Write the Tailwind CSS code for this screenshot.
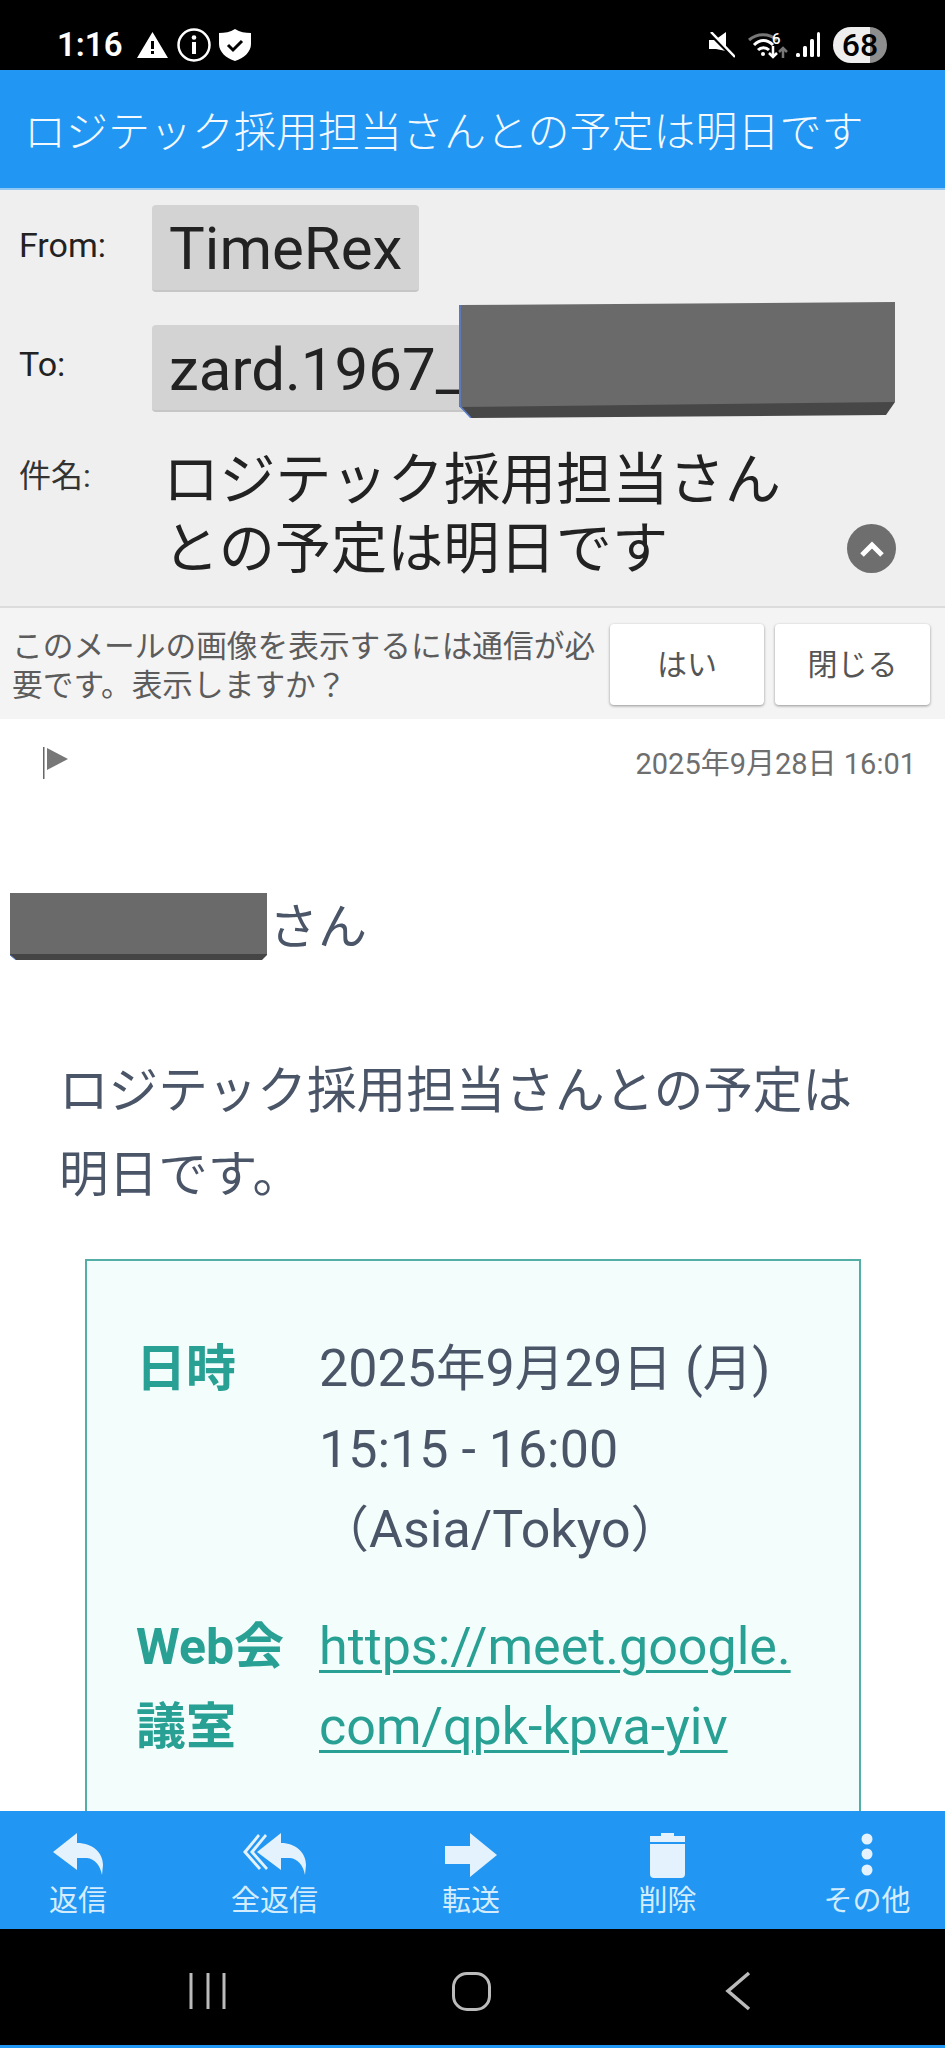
<!DOCTYPE html>
<html lang="ja">
<head>
    <meta charset="UTF-8">
    <meta name="viewport" content="width=device-width, initial-scale=1.0">
    <title>Mail</title>
    <script src="https://cdn.jsdelivr.net/npm/@tailwindcss/browser@4"></script>
</head>
<body class="bg-black">
    <div class="h-[2048px] w-[945px] flex flex-col overflow-hidden font-['Roboto','Noto_Sans_CJK_JP',sans-serif]">
        <!-- status bar -->
        <div class="h-[70px] shrink-0 bg-black flex items-center justify-between pt-[19px] pl-[57px] pr-[58px] text-white">
            <div class="flex items-center">
                <span class="text-[33px] leading-none font-semibold w-[80px]">1:16</span>
                <svg class="w-[31px] h-[26px]" viewBox="0 0 31 26"><path fill="#fff" fill-rule="evenodd" d="M15.5 0L31 26H0ZM14 9v8h3V9ZM14 19v3h3v-3Z"/></svg>
                <svg class="w-[34px] h-[34px] ml-[9px]" viewBox="0 0 34 34"><circle cx="17" cy="17" r="15.5" fill="none" stroke="#fff" stroke-width="2.5"/><rect x="15" y="14" width="4" height="12" fill="#fff"/><circle cx="17" cy="9.5" r="2.3" fill="#fff"/></svg>
                <svg class="w-[32px] h-[32px] ml-[8px]" viewBox="0 0 32 32"><path fill="#fff" d="M16 0C21 3 26 4 32 4V15C32 23 25 29 16 32C7 29 0 23 0 15V4C6 4 11 3 16 0Z"/><path fill="none" stroke="#000" stroke-width="3" d="M9 16l5 5 9-9"/></svg>
            </div>
            <div class="flex items-center">
                <svg class="w-[26px] h-[26px]" viewBox="0 0 26 26"><path fill="#fff" d="M0 8H6L17 0V19L7 17H0Z"/><path stroke="#000" stroke-width="3" d="M0 1L25 26"/><path stroke="#fff" stroke-width="2.5" d="M2 0L26 25"/></svg>
                <svg class="w-[48px] h-[28px] ml-[13px] overflow-visible" viewBox="0 0 48 28"><path fill="none" stroke="#777" stroke-width="3" d="M1 9C9 2 21 2 29 9"/><path fill="none" stroke="#fff" stroke-width="3" d="M6 14C12 8 19 8 25 14M10 19C13 16 18 16 21 19"/><circle cx="15" cy="23" r="2" fill="#fff"/><text x="24" y="13" font-size="15" font-weight="500" fill="#fff">6</text><path fill="none" stroke="#fff" stroke-width="2.5" d="M25 15V26M21 22l4 4 4-4"/><path fill="none" stroke="#777" stroke-width="2.5" d="M35 27V17M31 21l4-4 4 4"/></svg>
                <svg class="w-[24px] h-[26px] ml-[0px]" viewBox="0 0 24 26"><rect x="0" y="21" width="4" height="4" rx="1.5" fill="#fff"/><rect x="7" y="14" width="4" height="11" rx="1.5" fill="#fff"/><rect x="14" y="7" width="4" height="18" rx="1.5" fill="#fff"/><rect x="21" y="0" width="3" height="25" rx="1.5" fill="#fff"/></svg>
                <div class="w-[54px] h-[36px] ml-[13px] rounded-full overflow-hidden flex items-center justify-center text-black text-[32px] font-medium leading-none bg-[linear-gradient(90deg,#eeeeee_68%,#8e8e8e_68%)]">68</div>
            </div>
        </div>

        <!-- title -->
        <div class="h-[120px] shrink-0 bg-[#2196f3] border-b-2 border-[#90c8f3] flex items-center pl-[24px] pt-[7px]">
            <h1 class="text-[42px] leading-none text-[#f2f9ff] font-light whitespace-nowrap">ロジテック採用担当さんとの予定は明日です</h1>
        </div>

        <!-- mail header -->
        <div class="relative h-[418px] shrink-0 bg-[#efefef] border-b-2 border-[#dcdcdc] pt-[15px] pl-[19px]">
            <div class="flex items-center h-[87px]">
                <div class="w-[133px] text-[34px] text-[#222] -mt-[6px]">From:</div>
                <div class="h-[87px] px-[17px] bg-[#d3d3d3] border-b-2 border-[#c6c6c6] rounded-[4px] text-[60px] leading-[87px] text-[#222]">TimeRex</div>
            </div>
            <div class="flex items-center h-[87px] mt-[33px]">
                <div class="w-[133px] text-[34px] text-[#222] -mt-[8px]">To:</div>
                <div class="w-[700px] h-[87px] px-[17px] bg-[#d3d3d3] border-b-2 border-[#c6c6c6] rounded-[4px] text-[60px] leading-[90px] text-[#222]">zard.1967_</div>
            </div>
            <div class="flex mt-[34px]">
                <div class="w-[144px] text-[32px] leading-[44px] text-[#333] mt-[8px]">件名:</div>
                <div class="text-[56.2px] leading-[69px] text-[#222] w-[620px]">ロジテック採用担当さんとの予定は明日です</div>
            </div>
            <!-- redaction -->
            <svg class="absolute left-[459px] top-[112px] w-[436px] h-[116px]" viewBox="0 0 436 116">
                <path fill="#474747" d="M0 100L436 94V100L427 113L12 116L0 104Z"/>
                <path fill="#6a6a6a" d="M0 3L436 0V100L0 105Z"/>
                <path fill="none" stroke="#5b7fd0" stroke-width="1.5" d="M1 3V104L12 116"/>
            </svg>
            <button class="absolute left-[847px] top-[334px] w-[49px] h-[49px] rounded-full bg-[#6e6e6e] flex items-center justify-center">
                <svg class="w-[24px] h-[16px]" viewBox="0 0 24 16"><path fill="none" stroke="#fff" stroke-width="5" d="M2 14L12 4L22 14"/></svg>
            </button>
        </div>

        <!-- image notice -->
        <div class="h-[111px] shrink-0 bg-[#f4f4f4] flex items-start">
            <p class="w-[596px] pl-[12px] pt-[20px] text-[30.7px] leading-[38.5px] text-[#5c5c5c]">このメールの画像を表示するには通信が必要です。表示しますか？</p>
            <button class="w-[154px] h-[81px] mt-[16px] ml-[14px] bg-white rounded-[4px] shadow-[0_1px_3px_rgba(0,0,0,0.4)] text-[30px] text-[#555]">はい</button>
            <button class="w-[155px] h-[81px] mt-[16px] ml-[11px] bg-white rounded-[4px] shadow-[0_1px_3px_rgba(0,0,0,0.4)] text-[30px] text-[#555]">閉じる</button>
        </div>

        <!-- body -->
        <main class="flex-1 min-h-0 overflow-hidden bg-white">
            <div class="flex items-center justify-between h-[90px] pl-[43px] pr-[29px]">
                <svg class="w-[25px] h-[32px] mt-[-3px]" viewBox="0 0 25 32"><rect x="0" y="0" width="1.5" height="32" fill="#666"/><path fill="#777" d="M4 1L25 12L4 23Z"/></svg>
                <span class="text-[29px] text-[#6e6e6e] leading-none">2025年9月28日 16:01</span>
            </div>
            <div class="flex items-center pl-[10px] mt-[83px] text-[49px] leading-[67px] text-[#4a5568]">
                <svg class="w-[257px] h-[67px]" viewBox="0 0 257 67">
                    <path fill="#454545" d="M0 58H257V62L252 67H6L0 62Z"/>
                    <path fill="#6a6a6a" d="M0 0H257V61H0Z"/>
                    <path fill="none" stroke="#5b7fd0" stroke-width="1" d="M6 67L0 62"/>
                </svg>
                <span class="ml-[2px] mt-[2px]">さん</span>
            </div>
            <p class="pl-[59px] mt-[88px] w-[880px] text-[49.6px] leading-[84px] text-[#4a5568]">ロジテック採用担当さんとの予定は<br>明日です。</p>
            <div class="mx-[85px] mt-[42px] h-[700px] w-[776px] border-2 border-[#55aea6] bg-[#f3fdfc] pl-[49px] pt-[68px] text-[52px] leading-[80.5px]">
                <div class="grid grid-cols-[183px_1fr] gap-y-[36px]">
                    <div class="font-bold text-[#28a093] text-[50px]">日時</div>
                    <div class="text-[#4a5568]">2025<span class="text-[49.5px]">年</span>9<span class="text-[49.5px]">月</span>29<span class="text-[49.5px]">日</span> (<span class="text-[49.5px]">月</span>)<br>15:15 - 16:00<br><span class="text-[50px]">（</span>Asia/Tokyo<span class="text-[50px]">）</span></div>
                    <div class="font-bold text-[#28a093] text-[50px]">Web会<br>議室</div>
                    <a href="#" class="text-[#28a093] underline underline-offset-[6px] decoration-[3px]">https://meet.google.<br>com/qpk-kpva-yiv</a>
                </div>
            </div>
        </main>

        <!-- toolbar -->
        <nav class="h-[118px] shrink-0 bg-[#2196f3] flex gap-[76.5px] pl-[18px] pt-[22px] text-[#d3edff] text-[29px] leading-none">
            <a href="#" class="w-[120px] flex flex-col items-center">
                <svg class="w-[50px] h-[42px]" viewBox="0 0 50 42"><path fill="#e3f2fd" d="M0 19L24 0V10C40 10 50 20 50 32L49 42C47 32 42 26 34 25H24V37Z"/></svg>
                <span class="mt-[12px]">返信</span>
            </a>
            <a href="#" class="w-[120px] flex flex-col items-center">
                <svg class="w-[63px] h-[42px]" viewBox="0 0 63 42"><path fill="#e3f2fd" d="M14 19L38 0V10C53 10 63 20 63 32L62 42C60 32 55 26 47 25H38V37Z"/><path fill="#e3f2fd" d="M17 3L4 19L18 35L16 37L0 19L15 1Z"/><path fill="#e3f2fd" d="M24 3L11 19L25 35L23 37L7 19L22 1Z"/></svg>
                <span class="mt-[12px]">全返信</span>
            </a>
            <a href="#" class="w-[120px] flex flex-col items-center">
                <svg class="w-[52px] h-[44px]" viewBox="0 0 52 44"><path fill="#e3f2fd" d="M25 0L52 22L25 44V31H0V13H25Z"/></svg>
                <span class="mt-[10px]">転送</span>
            </a>
            <a href="#" class="w-[120px] flex flex-col items-center">
                <svg class="w-[35px] h-[45px]" viewBox="0 0 35 45"><path fill="#e3f2fd" d="M11 0H24V3H35V9H0V3H11ZM0 11H35V41Q35 45 31 45H4Q0 45 0 41Z"/></svg>
                <span class="mt-[9px]">削除</span>
            </a>
            <a href="#" class="w-[120px] ml-[3px] flex flex-col items-center">
                <svg class="w-[12px] h-[45px]" viewBox="0 0 12 45"><circle cx="6" cy="6" r="5.5" fill="#e3f2fd"/><circle cx="6" cy="21" r="5.5" fill="#e3f2fd"/><circle cx="6" cy="37" r="5.5" fill="#e3f2fd"/></svg>
                <span class="mt-[9px]">その他</span>
            </a>
        </nav>

        <!-- nav bar -->
        <div class="h-[116px] shrink-0 bg-black relative">
            <div class="flex items-center h-full pt-[8px] pl-[189px]">
                <svg class="w-[38px] h-[38px]" viewBox="0 0 38 38"><path stroke="#bbb" stroke-width="3" d="M2 1V37M19 1V37M35 1V37"/></svg>
                <div class="w-[39px] h-[39px] ml-[225px] rounded-[15px] border-[3px] border-[#bbb]"></div>
                <svg class="w-[26px] h-[40px] ml-[234px]" viewBox="0 0 26 40"><path fill="none" stroke="#bbb" stroke-width="3.5" d="M24 2L3 20L24 38"/></svg>
            </div>
        </div>
        <div class="h-[3px] shrink-0 bg-[#2196f3]"></div>
    </div>
</body>
</html>
